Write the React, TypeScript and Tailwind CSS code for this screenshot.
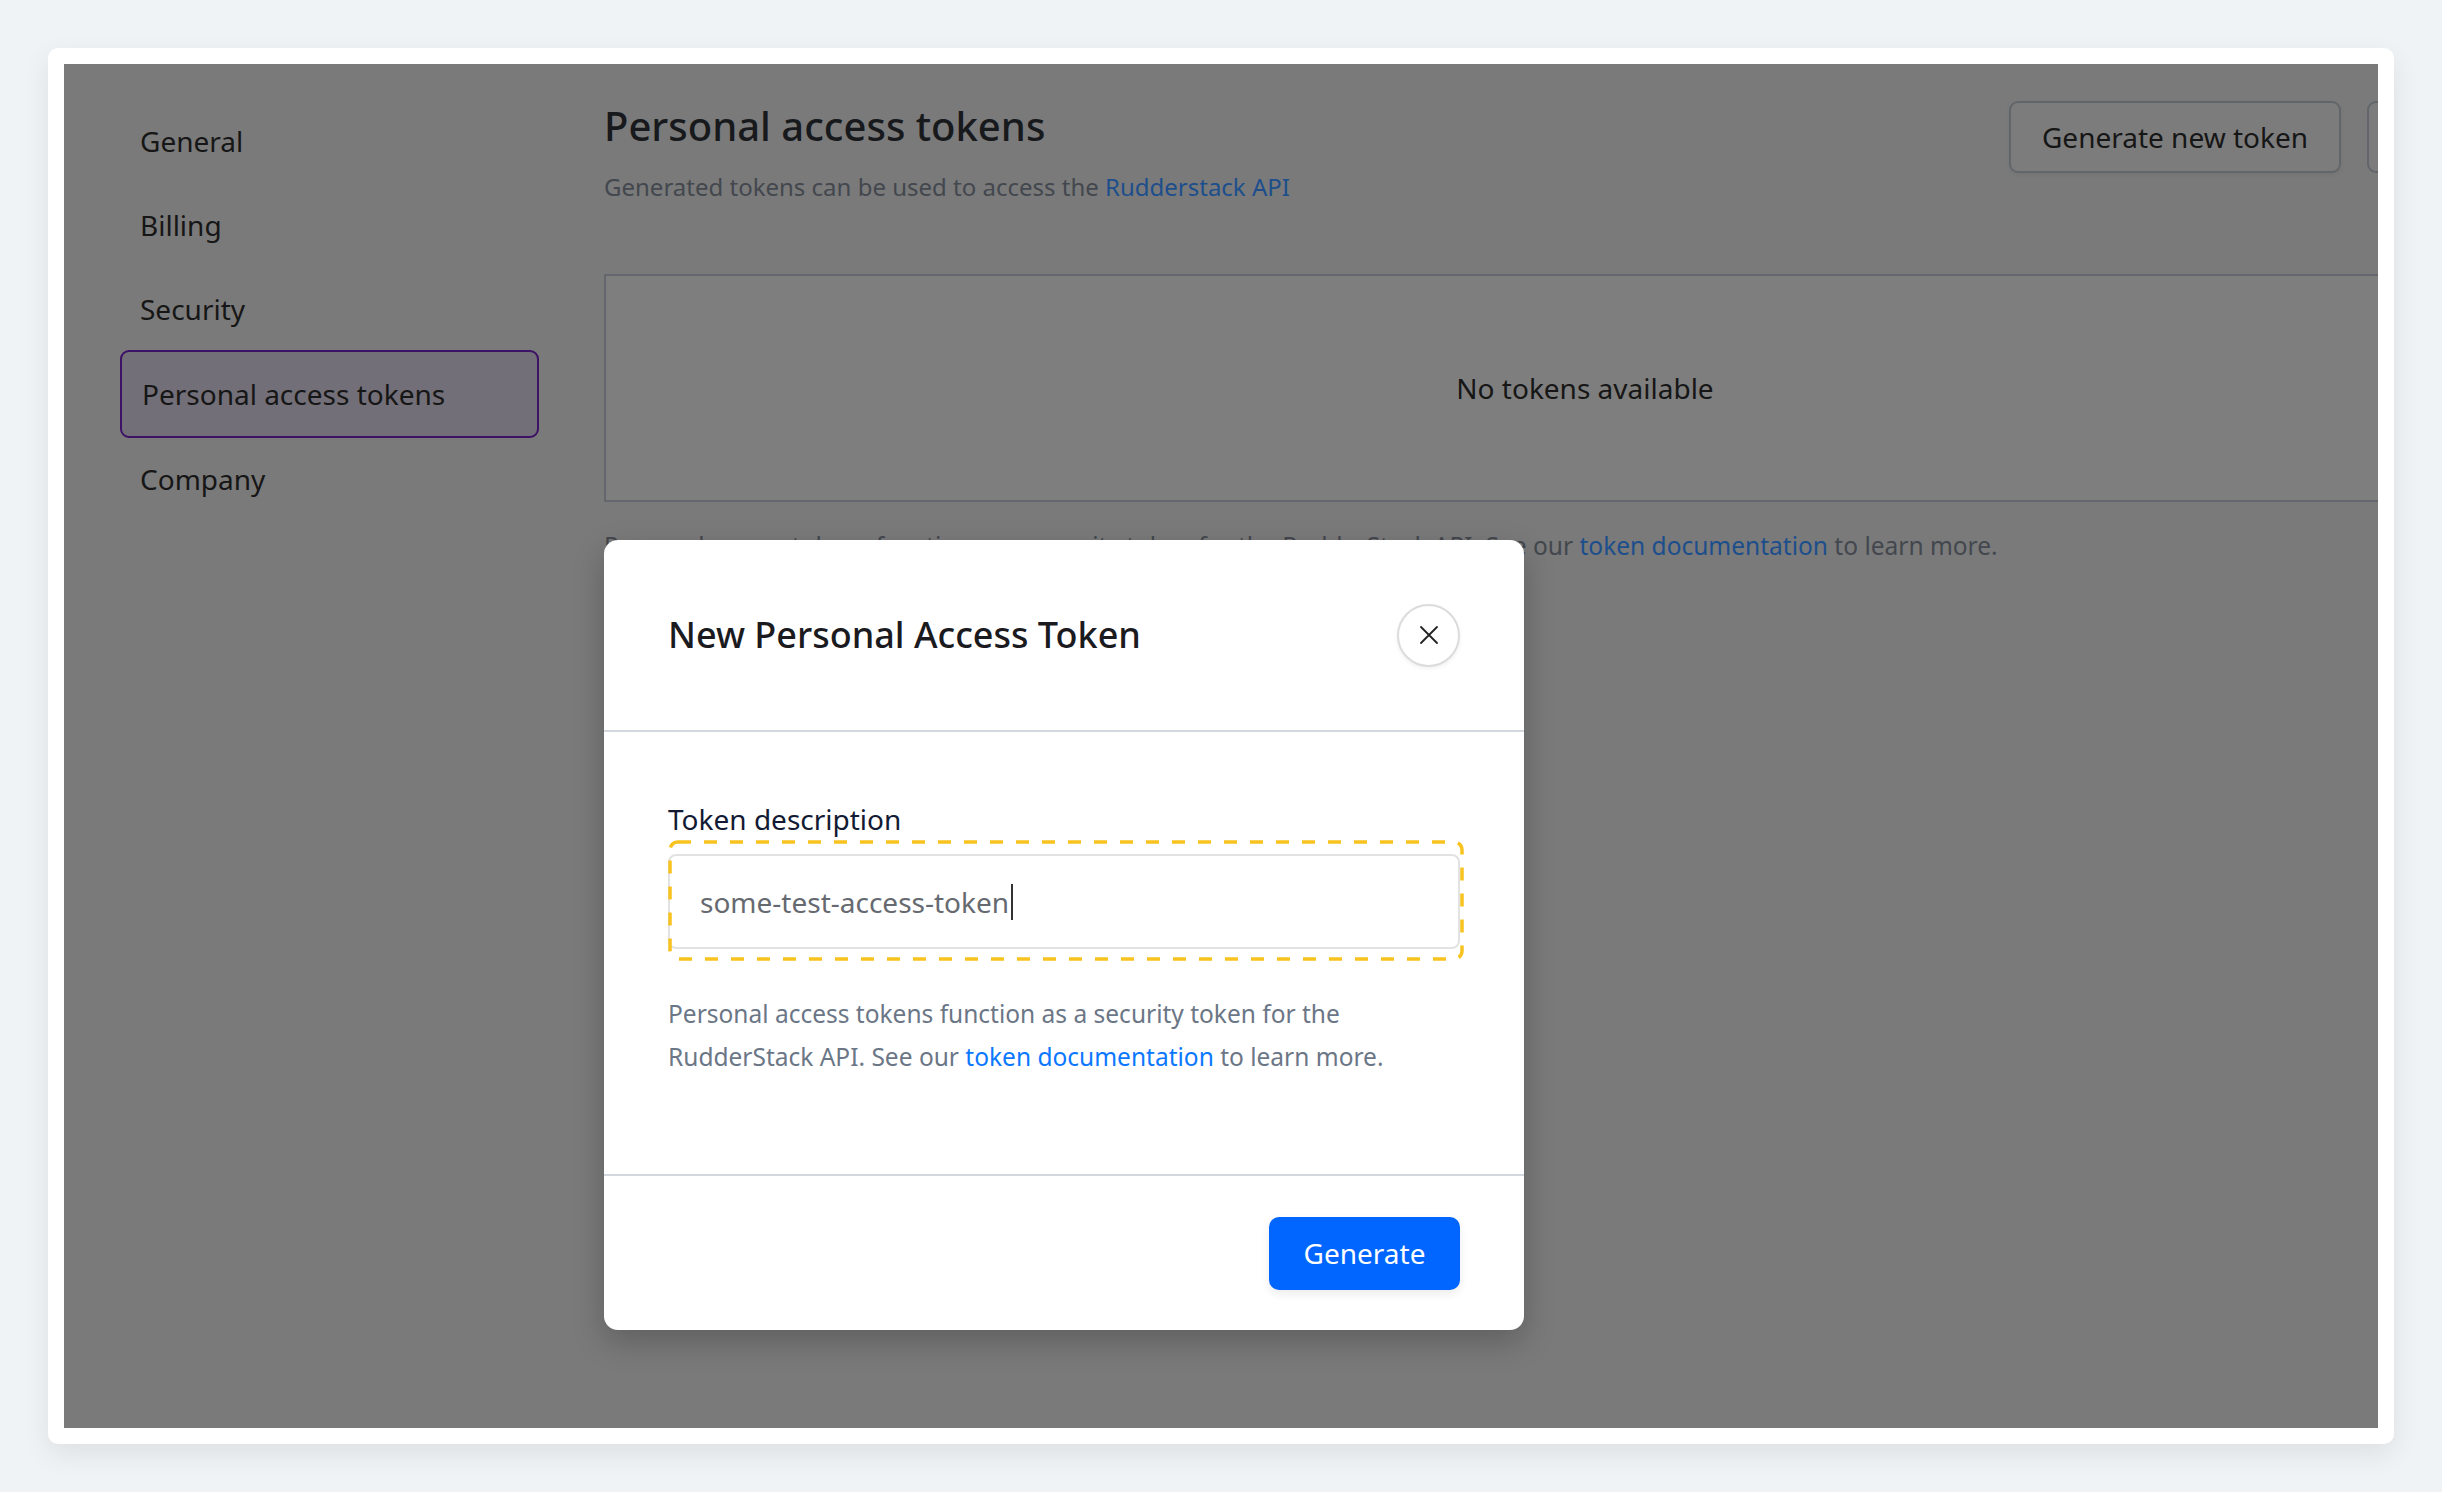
import React from 'react';

const navItems = ['General', 'Billing', 'Security', 'Personal access tokens', 'Company'];

const Sidebar = ({ active }: { active: string }) => (
  <aside className="w-[540px] shrink-0 pl-[56px] pr-[65px] pt-[35px]">
    <ul className="flex flex-col">
      {navItems.map(item =>
        item === active ? (
          <li
            key={item}
            className="h-[88px] my-[-1px] flex items-center px-[20px] rounded-[9px] border-2 border-[#3c1166] bg-[#726f78] text-[28px] text-[#161616]"
          >
            {item}
          </li>
        ) : (
          <li key={item} className="h-[84px] flex items-center px-[20px] text-[28px] text-[#161616]">
            {item}
          </li>
        )
      )}
    </ul>
  </aside>
);

const TokensPage = () => (
  <main className="w-[1962px] shrink-0 pt-[34px]">
    <div className="flex items-start justify-between">
      <div>
        <h1 className="text-[40px] leading-[56px] font-medium text-[#17191c]">Personal access tokens</h1>
        <p className="mt-[15px] text-[24px] leading-[36px] text-[#43474e]">
          Generated tokens can be used to access the <span className="text-[#1d4e8c]">Rudderstack API</span>
        </p>
      </div>
      <div className="flex gap-[26px] mt-[3px]">
        <button className="h-[72px] w-[332px] rounded-[9px] border-2 border-[#62666b] bg-[#7c7c7c] text-[28px] text-[#161616] shadow-[0_2px_4px_rgba(0,0,0,0.06)]">
          Generate new token
        </button>
        <button className="h-[72px] w-[199px] rounded-[9px] border-2 border-[#62666b] bg-[#7c7c7c] text-[28px] text-[#161616]">
          Refresh
        </button>
      </div>
    </div>

    <div className="mt-[69px] h-[228px] border-2 border-[#64686e] bg-[#7e7e7e] flex items-center justify-center">
      <span className="text-[28px] text-[#161616]">No tokens available</span>
    </div>

    <p className="mt-[26px] text-[24.5px] leading-[36px] text-[#43474e]">
      Personal access tokens function as a security token for the RudderStack API. See our{' '}
      <span className="text-[#1d4e8c]">token documentation</span> to learn more.
    </p>
  </main>
);

const CloseIcon = () => (
  <svg width="20" height="20" viewBox="0 0 20 20" fill="none" stroke="#222" strokeWidth="1.8" strokeLinecap="round">
    <path d="M2 2 L18 18 M18 2 L2 18" />
  </svg>
);

const NewTokenModal = () => (
  <div className="absolute left-[540px] top-[476px] w-[920px] rounded-[14px] bg-white shadow-[0_12px_32px_rgba(0,0,0,0.22)]">
    <div className="h-[192px] px-[64px] flex items-center justify-between border-b-2 border-[#d3d8de]">
      <h2 className="text-[36px] font-medium text-[#1b1b1f]">New Personal Access Token</h2>
      <button className="w-[63px] h-[63px] rounded-full border-2 border-[#dcdcdc] bg-white flex items-center justify-center shadow-[0_2px_4px_rgba(0,0,0,0.06)]">
        <CloseIcon />
      </button>
    </div>

    <div className="pt-[66px] px-[64px] pb-[96px]">
      <label className="block text-[28px] leading-[42px] text-[#131a33]">Token description</label>
      <div className="relative mt-[14px]">
        <div className="h-[95px] rounded-[8px] border-2 border-[#e2e2e2] pl-[30px] flex items-center text-[28px] text-[#666a70]">
          some-test-access-token
          <span className="ml-[2px] w-[2px] h-[36px] bg-[#333]" />
        </div>
        {/* focus ring */}
        <svg className="absolute left-0 top-[-14px] pointer-events-none" width="796" height="121" viewBox="0 0 796 121" fill="none">
          <rect x="2" y="2" width="792" height="117" rx="8" stroke="#f8c21f" strokeWidth="3.5" strokeDasharray="13 13" />
        </svg>
      </div>
      <p className="mt-[43px] text-[24.5px] leading-[43px] text-[#6b7686]">
        Personal access tokens function as a security token for the RudderStack API. See our{' '}
        <span className="text-[#0b78ff]">token documentation</span> to learn more.
      </p>
    </div>

    <div className="h-[156px] px-[64px] flex items-center justify-end border-t-2 border-[#d3d8de]">
      <button className="w-[191px] h-[73px] rounded-[10px] bg-[#0066ff] text-white text-[28px] shadow-[0_4px_10px_rgba(0,0,0,0.08)]">
        Generate
      </button>
    </div>
  </div>
);

export default function App() {
  return (
    <div className="min-h-screen bg-[#eff3f6] p-[48px] font-['Noto_Sans',sans-serif]">
      <div className="h-[1396px] rounded-[10px] bg-white p-[16px] shadow-[0_10px_28px_rgba(0,0,0,0.08)]">
        <div className="relative h-full overflow-hidden bg-[#7a7a7a] flex">
          <Sidebar active="Personal access tokens" />
          <TokensPage />
          <NewTokenModal />
        </div>
      </div>
    </div>
  );
}
